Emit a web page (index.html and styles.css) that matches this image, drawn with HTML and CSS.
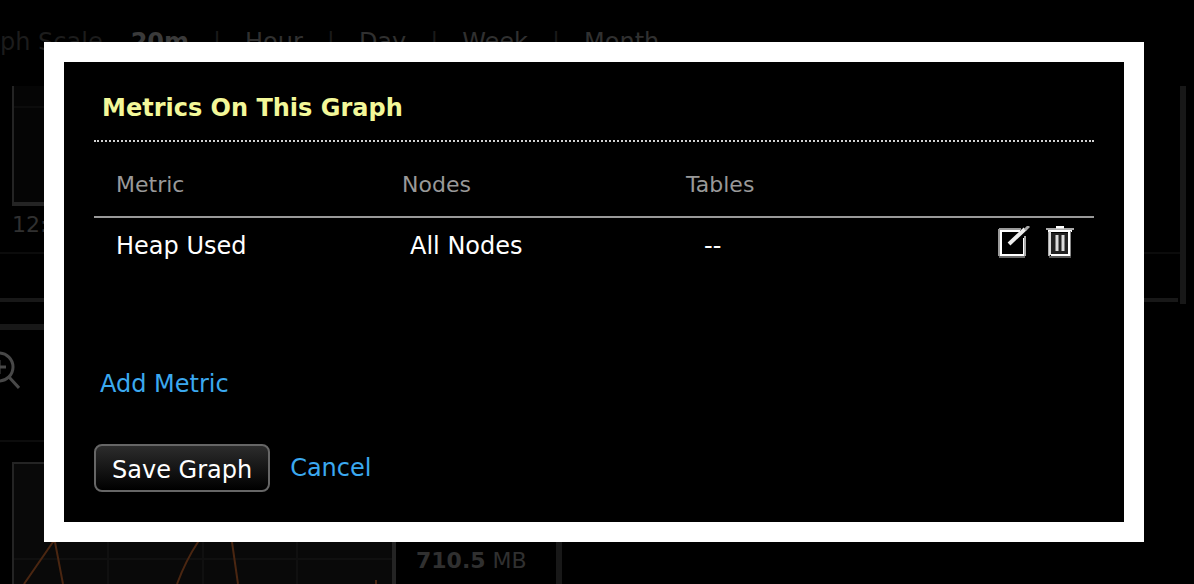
FILE: index.html
```html
<!DOCTYPE html>
<html lang="en">
<head>
<meta charset="utf-8">
<title>Metrics On This Graph</title>
<link rel="stylesheet" href="styles.css">
</head>
<body>
<main class="page">
  <nav class="scale">
    <span class="scale-label">ph Scale</span>
    <b class="scale-current">20m</b><i>|</i>
    <span>Hour</span><i>|</i>
    <span>Day</span><i>|</i>
    <span>Week</span><i>|</i>
    <span>Month</span>
  </nav>
  <section class="panel">
    <div class="plot"></div>
    <div class="axis">12:00</div>
    <div class="rule"></div>
  </section>
  <section class="toolbar">
    <svg class="magnifier" width="40" height="40" viewBox="0 0 40 40" fill="none" stroke="#484848" stroke-width="3">
      <circle cx="19" cy="17" r="14"/><path d="M12 17h14M19 10v14M29 27l10 11"/>
    </svg>
  </section>
  <section class="lower">
    <svg class="chart" width="384" height="122" viewBox="0 0 384 122" fill="none">
      <path fill="#090909" d="M0 0h384v122H0z"/>
      <path stroke="#101010" stroke-width="2" d="M96 0v122M191 0v122M285 0v122M0 97h384"/>
      <path stroke="#4a2611" stroke-width="2" d="M12 122L41 80L43 80L51 122M165 122Q174 98 186 80Q207 35 214 60L220 80L226 122M364 122v-4"/>
      <path stroke="#242424" stroke-width="2" d="M0 1h384M1 0v122"/>
      <path stroke="#242424" stroke-width="4" d="M382 0v122"/>
    </svg>
    <div class="reading"><b>710.5</b> MB</div>
  </section>
</main>

<div class="dialog" role="dialog" aria-labelledby="dialog-title">
  <h1 class="title" id="dialog-title">Metrics On This Graph</h1>
  <table class="metrics">
    <thead>
      <tr><th>Metric</th><th>Nodes</th><th class="tables-head">Tables</th><th></th></tr>
    </thead>
    <tbody>
      <tr>
        <td>Heap Used</td>
        <td class="nodes">All Nodes</td>
        <td class="tables">--</td>
        <td class="actions">
          <div class="tools">
            <button class="icon" aria-label="Edit metric">
              <svg width="32" height="32" viewBox="0 0 32 32" fill="none">
                <path stroke="#666" stroke-width="2" d="M1 31h26"/>
                <path stroke="#999" stroke-width="2" d="M1 3h22M1 3v27"/>
                <path stroke="#fff" stroke-width="2" d="M22 5H3v24h23V12"/>
                <path stroke="#aaa" stroke-width="2" d="M27 10v20"/>
                <path stroke="#eee" stroke-width="4" d="M11 18L27 3"/>
                <path stroke="#aaa" stroke-width="3" d="M27 4l4-4"/>
              </svg>
            </button>
            <button class="icon" aria-label="Delete metric">
              <svg width="28" height="32" viewBox="0 0 28 32" fill="none">
                <path fill="#222" d="M5 7h18v21H5z"/>
                <path stroke="#aaa" stroke-width="2" d="M0 3h28M3 5v25"/>
                <path stroke="#fff" stroke-width="2" d="M2 5h24M5 29h18M23 5v25"/>
                <path stroke="#ddd" stroke-width="2" d="M4 5v24"/>
                <path stroke="#888" stroke-width="1" d="M24.500 5v25"/>
                <path stroke="#fff" stroke-width="3" d="M10 1h8"/>
                <path stroke="#ddd" stroke-width="3" d="M11 9v16M17 9v16"/>
                <path stroke="#555" stroke-width="2" d="M3 31h22"/>
              </svg>
            </button>
          </div>
        </td>
      </tr>
    </tbody>
  </table>
  <a class="add" href="#">Add Metric</a>
  <div class="footer">
    <button class="save">Save Graph</button>
    <a href="#">Cancel</a>
  </div>
</div>
</body>
</html>
```
FILE: styles.css
```css
* { box-sizing: border-box; }

body {
  margin: 0;
  overflow: hidden;
  background: #000;
  color: #fff;
  font: 24px/28px "DejaVu Sans", sans-serif;
}

.page { color: #303030; }

.scale {
  display: flex;
  height: 86px;
  padding-top: 28px;
}
.scale-label { color: #1c1c1c; margin-right: 28px; }
.scale-current { color: #3a3a3a; }
.scale i { width: 56px; text-align: center; font-style: normal; color: #1a1a1a; }

.panel {
  height: 218px;
  margin-right: 8px;
  border-right: 6px solid #181818;
}
.plot {
  height: 120px;
  margin: 0 60px 0 12px;
  border-left: 2px solid #242424;
  border-bottom: 4px solid #242424;
  background: linear-gradient(#050505 20px, #0c0c0c 20px, #0c0c0c 22px, #050505 22px);
}
.axis {
  height: 48px;
  padding: 5px 12px;
  font-size: 22px;
  border-bottom: 2px solid #0b0b0b;
}
.rule { height: 48px; margin-right: 2px; border-bottom: 4px solid #181818; }

.toolbar {
  height: 118px;
  margin-top: 20px;
  margin-right: 50px;
  padding-top: 20px;
  border-top: 6px solid #181818;
  border-bottom: 2px solid #0c0c0c;
}
.magnifier { display: block; margin-left: -20px; }

.lower { display: flex; margin: 20px 0 0 12px; }
.reading {
  width: 166px;
  padding: 85px 0 0 20px;
  font-size: 22px;
  border-right: 6px solid #181818;
}

.dialog {
  position: absolute;
  top: 42px;
  left: 44px;
  right: 50px;
  padding: 32px 30px 30px;
  border: 20px solid #fff;
  background: #000;
}

.title {
  margin: 0 0 29px;
  padding: 0 8px 18px;
  border-bottom: 2px dotted #d0d0d0;
  color: #f3f899;
  font-size: 24px;
}

.metrics {
  width: 100%;
  table-layout: fixed;
  border-collapse: collapse;
  text-align: left;
}
.metrics th {
  padding: 0 0 17px 22px;
  border-bottom: 2px solid #999;
  color: #999;
  font-size: 22px;
  font-weight: normal;
  width: 28.6%;
}
.metrics th.tables-head { padding-left: 20px; }
.metrics th:last-child { width: auto; }
.metrics td { padding: 14px 0 0 22px; }
.metrics .nodes { padding-left: 30px; }
.metrics .tables { padding-left: 38px; }
.metrics .actions { padding: 8px 20px 0 0; vertical-align: top; }

.tools { display: flex; justify-content: flex-end; gap: 16px; }
.icon { padding: 0; border: 0; background: none; }
.icon svg { display: block; }

a { color: #3ba9f0; text-decoration: none; }
.add { display: inline-block; margin: 110px 0 0 6px; }

.footer {
  display: flex;
  align-items: center;
  gap: 20px;
  margin-top: 46px;
}
.save {
  padding: 10px 16px 6px;
  border: 2px solid #666;
  border-radius: 8px;
  background: linear-gradient(#2c2c2c, #000);
  color: #fff;
  font: inherit;
}
```
